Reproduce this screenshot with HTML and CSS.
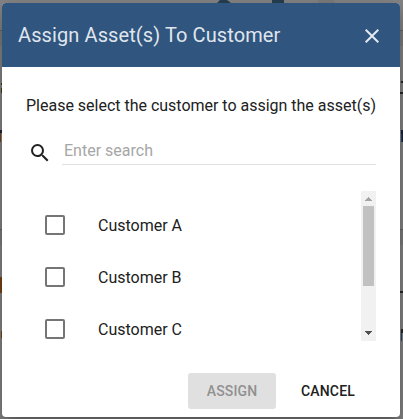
FILE: index.html
```html
<!DOCTYPE html>
<html lang="en">
<head>
<meta charset="utf-8">
<title>Assign Asset(s) To Customer</title>
<link rel="stylesheet" href="styles.css">
</head>
<body>
<svg class="backdrop" viewBox="0 0 403 419" aria-hidden="true">
  <path fill="#7d7d7d" d="M318 0h16v3h-16zM0 31h403v15H0zM0 229h403v16H0z"/>
  <path stroke="#666" d="M0 30.5h403M0 229.5h403"/>
  <path fill="#263f51" d="M217 3l3-3h7l4 3zM272 0h12v3h-12z"/>
  <path fill="#493815" d="M1 83h1v2H1zM1 88h1v5H1z"/>
  <path fill="#1c2438" d="M0 130h2v3H0zM401 130h2v12h-2z"/>
  <path fill="#774316" d="M0 133h1v9H0zM0 277h2v16H0zM1 331h1v7H1z"/>
  <path fill="#24466e" d="M401 134h1v8h-1zM401 331h1v10h-1z"/>
  <path fill="#272727" d="M401 81h2v2h-2zM400 92h3v2h-3zM400 291h3v2h-3zM401 329h2v4h-2z"/>
</svg>
<main class="dialog">
  <header class="toolbar">
    <h2 class="title">Assign Asset(s) To Customer</h2>
    <button class="close" aria-label="Close"><svg width="24" height="24" viewBox="0 0 24 24"><path d="M19 6.41L17.59 5 12 10.59 6.41 5 5 6.41 10.59 12 5 17.59 6.41 19 12 13.41 17.59 19 19 17.59 13.41 12z"/></svg></button>
  </header>
  <section class="content">
    <p class="message">Please select the customer to assign the asset(s)</p>
    <div class="search">
      <svg width="24" height="24" viewBox="0 0 24 24"><path d="M15.5 14h-.79l-.28-.27A6.471 6.471 0 0 0 16 9.5 6.5 6.5 0 1 0 9.5 16c1.61 0 3.09-.59 4.23-1.57l.27.28v.79l5 4.99L20.49 19l-4.99-5zm-6 0C7.01 14 5 11.99 5 9.5S7.01 5 9.5 5 14 7.01 14 9.5 11.99 14 9.5 14z"/></svg>
      <input class="field" type="text" placeholder="Enter search">
    </div>
    <div class="list-area">
      <ul class="list">
        <li class="item"><span class="checkbox"></span>Customer A</li>
        <li class="item"><span class="checkbox"></span>Customer B</li>
        <li class="item"><span class="checkbox"></span>Customer C</li>
      </ul>
      <div class="scrollbar">
        <svg width="15" height="15" viewBox="0 0 15 15" shape-rendering="crispEdges"><path fill="#a3a3a3" d="M7 6h1v1h1v1h1v1h1v1H4V9h1V8h1V7h1z"/></svg>
        <div class="thumb"></div>
        <svg class="down" width="15" height="15" viewBox="0 0 15 15" shape-rendering="crispEdges"><path fill="#505050" d="M4 5h7v1h-1v1H9v1H8v1H7V8H6V7H5V6H4z"/></svg>
      </div>
    </div>
  </section>
  <footer class="actions">
    <button class="button assign" disabled>ASSIGN</button>
    <button class="button cancel">CANCEL</button>
  </footer>
</main>
</body>
</html>
```

FILE: styles.css
```css
* { box-sizing: border-box; }
body {
  margin: 0;
  width: 403px;
  height: 419px;
  padding: 3px 3px 2px 2px;
  overflow: hidden;
  background: #858585;
  font-family: Roboto, sans-serif;
  color: #212121;
}
.backdrop {
  position: absolute;
  inset: 0;
  width: 403px;
  height: 419px;
}
.dialog {
  position: relative;
  width: 398px;
  height: 414px;
  display: flex;
  flex-direction: column;
  background: #fff;
  border-radius: 4px;
  overflow: hidden;
  box-shadow: 0 7px 8px -4px rgba(0,0,0,.2), 0 13px 19px 2px rgba(0,0,0,.14), 0 5px 24px 4px rgba(0,0,0,.12);
}
.toolbar {
  height: 64px;
  flex: none;
  display: flex;
  align-items: center;
  justify-content: space-between;
  padding: 0 16px;
  background: #305680;
}
.title {
  margin: 0;
  font-size: 20px;
  font-weight: 400;
  letter-spacing: .1px;
  color: rgba(255,255,255,.87);
}
.close {
  display: flex;
  margin: 2px 0 0;
  padding: 0;
  border: 0;
  background: none;
  fill: rgba(255,255,255,.87);
}
.content { padding: 29px 24px 0; }
.message {
  margin: 0;
  font-size: 16px;
  line-height: 19px;
  letter-spacing: -.01px;
  white-space: nowrap;
}
.search {
  display: flex;
  align-items: center;
  gap: 10px;
  height: 30px;
  margin-top: 20px;
  padding-left: 2px;
  fill: #212121;
}
.search svg { margin-top: 5px; }
.field {
  flex: 1;
  min-width: 0;
  height: 30px;
  padding: 2px 2px 0;
  border: 0;
  border-bottom: 1px solid #e0e0e0;
  outline: 0;
  font: 16px Roboto, sans-serif;
}
.field::placeholder { color: #a6a6a6; opacity: 1; }
.list-area {
  display: flex;
  height: 150px;
  margin-top: 26px;
  overflow: hidden;
}
.list {
  flex: 1;
  margin: 0;
  padding: 8px 0 0;
  list-style: none;
}
.item {
  display: flex;
  align-items: center;
  gap: 33px;
  height: 52px;
  padding-left: 19px;
  font-size: 16px;
}
.checkbox {
  width: 20px;
  height: 20px;
  border: 2px solid #757575;
  border-radius: 2px;
}
.scrollbar {
  width: 15px;
  display: flex;
  flex-direction: column;
  align-items: center;
  background: #f1f1f1;
}
.thumb { width: 11px; height: 80px; background: #c1c1c1; }
.down { margin-top: auto; }
.actions {
  display: flex;
  justify-content: flex-end;
  gap: 12px;
  margin-top: auto;
  padding: 0 32px 8px 0;
}
.button {
  height: 36px;
  padding: 0;
  border: 0;
  border-radius: 3px;
  font: 500 14px Roboto, sans-serif;
  letter-spacing: .14px;
}
.assign { width: 88px; background: #e0e0e0; color: #919191; }
.cancel { width: 80px; background: none; color: #212121; }
```
